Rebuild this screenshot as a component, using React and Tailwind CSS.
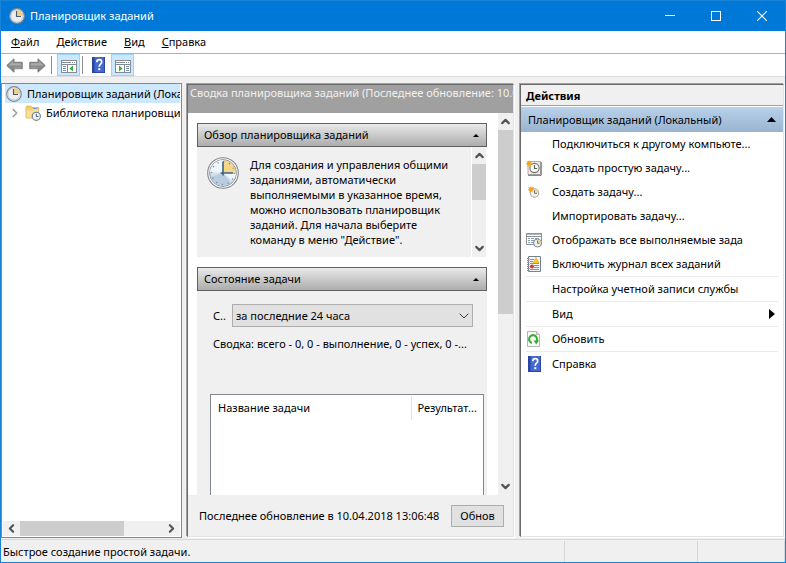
import { ChevronDown, ChevronLeft, ChevronRight, ChevronUp } from 'lucide-react';

function ClockIcon({ className = 'size-4' }) {
  return (
    <svg viewBox="0 0 32 32" className={className} aria-hidden="true">
      <circle cx="16" cy="16" r="15.3" fill="#fafafa" stroke="#85878a" strokeWidth="1.1" />
      <circle cx="16" cy="16" r="13.4" fill="#d3e0ec" stroke="#8e949a" strokeWidth="1" />
      <path d="M16 16L3.500 20A12.800 12.800 0 0 0 24 26z" fill="#b9cde0" />
      <path d="M16 16L3 15A13 13 0 0 1 16 3zM16 16L26 24A13 13 0 0 0 29 16z" fill="#eff5fa" />
      <path d="M16 16V3.200A12.800 12.800 0 0 1 28.800 16z" fill="#f5d58a" />
      <circle cx="16" cy="16" r="11.400" fill="none" stroke="#6c8098" strokeWidth="1.400" strokeDasharray="1 4.970" />
      <path d="M16 4.500V18.500M13.500 16H26" stroke="#3d6186" strokeWidth="1.600" fill="none" />
    </svg>
  );
}

// small icons draw the clock with thicker hands so it stays readable
function SmallClock() {
  return (
    <svg viewBox="0 0 16 16" className="size-4 shrink-0" aria-hidden="true">
      <circle cx="8" cy="8" r="7.3" fill="#e9eef2" stroke="#85878a" strokeWidth="1.2" />
      <circle cx="8" cy="8" r="6" fill="none" stroke="#c4c8cc" strokeWidth=".8" />
      <path d="M8 8V2.2A5.8 5.8 0 0 1 13.8 8z" fill="#f3cf86" />
      <path d="M7.500 3V8.500H12" stroke="#4c5a68" strokeWidth="1.1" fill="none" />
    </svg>
  );
}

function FolderClock() {
  return (
    <svg viewBox="0 0 16 16" className="size-4 shrink-0" aria-hidden="true">
      <path d="M1 2.500l.8-1.500h4l1 1.500h6.700V13H1z" fill="#f3cf74" stroke="#d9ae52" strokeWidth=".8" />
      <path d="M8 3.500h4" stroke="#6fa5d8" strokeWidth="1" />
      <path d="M1.500 5.500h5l1-1h5.500v8H1.500z" fill="#f9df98" />
      <circle cx="11.300" cy="11.300" r="4.100" fill="#eef4f7" stroke="#6e7f87" strokeWidth="1.100" />
      <path d="M11.300 8.800v2.700h2.200" stroke="#3f6378" strokeWidth="1" fill="none" />
    </svg>
  );
}

function HelpIcon() {
  return (
    <svg viewBox="0 0 13 16" className="h-4 w-[13px]" aria-hidden="true">
      <rect width="13" height="16" fill="#4468cf" />
      <path d="M0 0h2.500v16H0z" fill="#2845a4" />
      <path d="M12.500 0v16M0 15.500h13" stroke="#2b479f" />
      <path d="M4.800 5.200C4.800 3.500 5.700 2.700 7.200 2.700c1.500 0 2.500.8 2.500 2.300 0 2-2.500 2.300-2.500 4.700" stroke="#fff" strokeWidth="1.700" fill="none" />
      <rect x="6.300" y="11.200" width="2" height="2" fill="#fff" />
    </svg>
  );
}

function ArrowIcon({ flip }) {
  return (
    <svg viewBox="0 0 17 15" className={flip ? 'h-[15px] w-[17px] -scale-x-100' : 'h-[15px] w-[17px]'} aria-hidden="true">
      <path d="M.8 7.500L8 .8v3.500h8.200v6.400H8v3.500z" fill="#8a8a8a" stroke="#777" strokeLinejoin="round" />
      <path d="M2.500 7.400L7.200 3v2.300h8v2.100z" fill="#aaa" />
      <path d="M8 10h7.500" stroke="#a4a4a4" />
    </svg>
  );
}

function PaneIcon({ right }) {
  return (
    <svg viewBox="0 0 16 13" className="h-[13px] w-4" aria-hidden="true">
      <rect x=".5" y=".5" width="15" height="12" fill="#fff" stroke="#858b94" />
      <path d="M1 2.500h9M11 2.500h1M13 2.500h1" stroke="#858b94" />
      <path d="M1 4.500h14" stroke="#858b94" />
      {right ? (
        <>
          <path d="M9.500 5v7" stroke="#858b94" />
          <path d="M11 6.500h3M11 8.500h3M11 10.500h3" stroke="#6f8fb3" />
          <path d="M4 5.500l3.500 3L4 11.500z" fill="#33ad3a" />
        </>
      ) : (
        <>
          <path d="M6.500 5v7" stroke="#858b94" />
          <path d="M2 6.500h3M2 8.500h3M2 10.500h3" stroke="#6f8fb3" />
          <path d="M12 5.500l-3.500 3 3.500 3z" fill="#33ad3a" />
        </>
      )}
    </svg>
  );
}

function BasicTaskIcon() {
  return (
    <svg viewBox="0 0 16 16" className="size-4" aria-hidden="true">
      <path d="M2 1.500h12.500v13H2z" fill="#eeeceb" stroke="#b0adab" />
      <path d="M15.200 2v13.300H2" fill="none" stroke="#6d6968" />
      <circle cx="8.500" cy="8" r="4.600" fill="#f8f6ef" stroke="#77746f" strokeWidth="1.100" />
      <path d="M8.500 5v3.500h2.700" stroke="#56616d" strokeWidth="1.100" fill="none" />
      <path d="M3 0l.8 2L6 1.400 5 3.200l2 1-2.200.6.3 2.200L3.200 5.600 1.400 7l.1-2.200L-.5 4.200 1.200 3 .5 1l2 .8z" fill="#f5a81c" />
    </svg>
  );
}

function NewTaskIcon() {
  return (
    <svg viewBox="0 0 16 16" className="size-4" aria-hidden="true">
      <circle cx="8.500" cy="9" r="4.200" fill="#f4f2ec" stroke="#aaa6a2" strokeWidth="1.100" />
      <path d="M8.500 9V5a4 4 0 0 1 4 4z" fill="#f0d9a0" />
      <path d="M8.500 6.200v3.200H11" stroke="#6c7a88" fill="none" />
      <path d="M5 2l.8 1.600L8 3 7 5l1.500 1-2 .5.2 2L5 7.200 3.300 8.500l.1-2-1.900-.6L3 4.800 2.200 3l2 .4z" fill="#f5a31c" />
    </svg>
  );
}

function RunningTasksIcon() {
  return (
    <svg viewBox="0 0 16 16" className="size-4" aria-hidden="true">
      <path d="M.5 1.500h15v11H.5z" fill="#fff" stroke="#8b9199" />
      <path d="M1 2.500h14" stroke="#b5bac1" strokeWidth="1" />
      <path d="M1 4.500h14" stroke="#8b9199" />
      <path d="M2 6.500h2M5 6.500h3M9 6.500h4M2 8.500h2M5 8.500h3M2 10.500h2M5 10.500h3" stroke="#8b9bb0" />
      <circle cx="11.500" cy="11" r="4" fill="#e9f1f4" stroke="#84878a" />
      <path d="M11.500 11V7.500A3.500 3.500 0 0 1 15 11z" fill="#efd69a" />
      <path d="M11.500 8.500v2.800h2" stroke="#4283a0" fill="none" />
    </svg>
  );
}

function JournalIcon() {
  return (
    <svg viewBox="0 0 16 16" className="size-4" aria-hidden="true">
      <path d="M2.500.5h12v15h-12z" fill="#f5f7fa" stroke="#747f92" />
      <path d="M4 3.500h4M4 5.500h3M4 7.500h9M8 9.500h5M8 11.500h5M4 13.500h9" stroke="#6d93cf" />
      <path d="M1 2.500h2.500M1 4.500h2.500M1 6.500h2.500M1 8.500h2.500M1 10.500h2.500M1 12.500h2.500M1 14.500h2.500" stroke="#8a9098" />
      <path d="M10 1.500L13.200 7H7z" fill="#f8cb2c" stroke="#dfa916" strokeWidth=".6" />
      <circle cx="6" cy="10.500" r="2" fill="#d7332f" />
    </svg>
  );
}

function RefreshIcon() {
  return (
    <svg viewBox="0 0 16 16" className="size-4" aria-hidden="true">
      <path d="M1.500.5h9l3 3v12h-12z" fill="#fbfbfb" stroke="#b2b5b8" />
      <path d="M10.500.5v3h3" fill="#e8e8e8" stroke="#b2b5b8" />
      <path d="M6 12A4 4 0 1 1 10.600 10" fill="none" stroke="#3aae34" strokeWidth="2" />
      <path d="M7.500 9.500h5.500l-2.700 4z" fill="#3aae34" />
    </svg>
  );
}

const actions = [
  { label: 'Подключиться к другому компьюте...' },
  { label: 'Создать простую задачу...', icon: <BasicTaskIcon /> },
  { label: 'Создать задачу...', icon: <NewTaskIcon /> },
  { label: 'Импортировать задачу...' },
  { label: 'Отображать все выполняемые зада', icon: <RunningTasksIcon /> },
  { label: 'Включить журнал всех заданий', icon: <JournalIcon /> },
  { label: 'Настройка учетной записи службы', line: true },
  { label: 'Вид', line: true, submenu: true },
  { label: 'Обновить', icon: <RefreshIcon />, line: true },
  { label: 'Справка', icon: <HelpIcon />, line: true },
];

const menu = [
  ['Ф', 'айл'],
  ['Д', 'ействие'],
  ['В', 'ид'],
  ['С', 'правка'],
];

function TitleBar() {
  return (
    <header className="flex h-[30px] shrink-0 items-center bg-[#0078d7] pl-2 text-white">
      <SmallClock />
      <h1 className="flex-1 pl-[5px]">Планировщик заданий</h1>
      <button aria-label="Свернуть" className="grid h-full w-[46px] place-items-center">
        <svg viewBox="0 0 10 10" className="size-2.5"><path d="M0 4.500h10" stroke="#fff" /></svg>
      </button>
      <button aria-label="Развернуть" className="grid h-full w-[46px] place-items-center">
        <svg viewBox="0 0 10 10" className="size-2.5"><rect x=".5" y=".5" width="9" height="9" fill="none" stroke="#fff" /></svg>
      </button>
      <button aria-label="Закрыть" className="grid h-full w-[46px] place-items-center">
        <svg viewBox="0 0 10 10" className="size-2.5"><path d="M0 0l10 10M10 0L0 10" stroke="#fff" strokeWidth="1.100" /></svg>
      </button>
    </header>
  );
}

function Toolbar() {
  return (
    <div className="flex h-[23px] shrink-0 items-center border-b border-[#dcdcdc] bg-white pl-[5px]">
      <button aria-label="Назад"><ArrowIcon /></button>
      <button aria-label="Вперед" className="ml-1.5"><ArrowIcon flip /></button>
      <span className="mx-[5px] h-[18px] w-px bg-[#8d8d8d]" />
      <button aria-label="Дерево консоли" className="grid h-[22px] w-[23px] place-items-center border border-[#99d1ff] bg-[#cce8ff] pt-0.5">
        <PaneIcon />
      </button>
      <span className="mr-[9px] ml-0.5 h-[18px] w-px bg-[#8d8d8d]" />
      <button aria-label="Справка"><HelpIcon /></button>
      <button aria-label="Панель действий" className="ml-1.5 grid h-[22px] w-[23px] place-items-center border border-[#99d1ff] bg-[#cce8ff] pt-0.5">
        <PaneIcon right />
      </button>
    </div>
  );
}

function Tree() {
  return (
    <nav className="flex min-w-0 flex-col border border-[#828790] bg-white px-px pb-px">
      <ul className="flex-1 overflow-hidden whitespace-nowrap">
        <li className="ml-0.5 flex h-[19px] items-center bg-[#cce8ff] pl-px">
          <SmallClock />
          <span className="pl-[5px]">Планировщик заданий (Локальный)</span>
        </li>
        <li className="flex h-[19px] items-center pl-[5px]">
          <ChevronRight className="size-3.5 shrink-0 text-[#a0a0a0]" strokeWidth={3} />
          <span className="w-[3px] shrink-0" />
          <FolderClock />
          <span className="pl-[5px]">Библиотека планировщика</span>
        </li>
      </ul>
      <div className="flex h-[15px] items-center bg-[#f0f0f0]">
        <ChevronLeft className="mx-0.5 size-[13px] text-[#555]" strokeWidth={4} />
        <div className="h-full w-[104px] bg-[#cdcdcd]" />
        <ChevronRight className="mr-0.5 ml-auto size-[13px] text-[#555]" strokeWidth={4} />
      </div>
    </nav>
  );
}

function SectionHeader({ children }) {
  return (
    <button className="flex h-6 w-full shrink-0 items-center justify-between border border-[#606060] bg-linear-to-b from-[#eaeaea] to-[#acacac] px-1.5 text-left">
      <span>{children}</span>
      <svg viewBox="0 0 6 3" className="mr-px h-[3px] w-[6px]"><path d="M3 0l3 3H0z" /></svg>
    </button>
  );
}

function Summary() {
  return (
    <main className="m-px flex min-w-0 flex-col border border-t-[#696969] border-r-[#e3e3e3] border-b-[#e3e3e3] border-l-[#696969] shadow-[-1px_-1px_0_#a0a0a0,1px_1px_0_#fff]">
      <h2 className="h-7 shrink-0 overflow-hidden bg-[#a0a0a0] pl-0.5 whitespace-nowrap text-[#f0f0f0]">
        Сводка планировщика заданий (Последнее обновление: 10.04.2018 13:06:48)
      </h2>
      <div className="flex min-h-0 flex-1">
        <div className="flex min-w-0 flex-1 flex-col overflow-hidden bg-white pt-2.5 pr-[11px] pl-[9px]">
          <SectionHeader>Обзор планировщика заданий</SectionHeader>
          <section className="mb-2.5 flex h-[110px] shrink-0 bg-[#f0f0f0]">
            <ClockIcon className="mt-2.5 ml-2.5 size-8 shrink-0" />
            <p className="mt-2.5 ml-[11px] flex-1 leading-[15px] whitespace-nowrap">
              Для создания и управления общими<br />
              заданиями, автоматически<br />
              выполняемыми в указанное время,<br />
              можно использовать планировщик<br />
              заданий. Для начала выберите<br />
              команду в меню "Действие".
            </p>
            <div className="flex w-4 flex-col items-center border-x border-white">
              <ChevronUp className="my-0.5 size-[13px] text-[#555]" strokeWidth={4} />
              <div className="h-9 w-full bg-[#cdcdcd]" />
              <ChevronDown className="mt-auto mb-0.5 size-[13px] text-[#555]" strokeWidth={4} />
            </div>
          </section>
          <SectionHeader>Состояние задачи</SectionHeader>
          <section className="flex min-h-0 flex-1 flex-col bg-[#f0f0f0]">
            <div className="mt-[13px] mr-3.5 ml-4 flex h-[23px] items-center">
              <label htmlFor="period" className="w-[19px] shrink-0">С..</label>
              <div className="relative h-full flex-1">
                <select id="period" className="h-full w-full appearance-none border border-[#adadad] bg-[#e1e1e1] px-[3px]">
                  <option>за последние 24 часа</option>
                </select>
                <ChevronDown className="pointer-events-none absolute top-1 right-px size-4 text-[#333]" strokeWidth={1.5} />
              </div>
            </div>
            <p className="mt-[9px] ml-4 whitespace-nowrap">Сводка: всего - 0, 0 - выполнение, 0 - успех, 0 -...</p>
            <div className="mt-[42px] mr-[3px] ml-[13px] min-h-0 flex-1 border border-b-0 border-[#828790] bg-white pt-px">
              <table className="w-full table-fixed">
                <thead>
                  <tr className="h-6 text-left">
                    <th className="border-r border-[#e5e5e5] pl-[7px] font-normal">Название задачи</th>
                    <th className="w-[72px] pl-1.5 font-normal whitespace-nowrap">Результат...</th>
                  </tr>
                </thead>
              </table>
            </div>
          </section>
        </div>
        <div className="flex w-[15px] flex-col items-center">
          <ChevronUp className="my-0.5 size-[13px] text-[#555]" strokeWidth={4} />
          <div className="h-[184px] w-full bg-[#cdcdcd]" />
          <ChevronDown className="mt-auto mb-0.5 size-[13px] text-[#555]" strokeWidth={4} />
        </div>
      </div>
      <div className="flex h-[41px] shrink-0 items-center justify-between pr-[9px] pl-[11px] whitespace-nowrap">
        <span>Последнее обновление в 10.04.2018 13:06:48</span>
        <button className="h-[22px] w-[53px] border border-[#adadad] bg-[#e1e1e1]">Обнов</button>
      </div>
    </main>
  );
}

function Actions() {
  return (
    <aside className="m-px flex min-w-0 flex-col border border-t-[#696969] border-r-[#e3e3e3] border-b-[#e3e3e3] border-l-[#696969] bg-white shadow-[-1px_-1px_0_#a0a0a0,1px_1px_0_#fff]">
      <h2 className="h-[21px] border-b border-[#a0a0a0] bg-[#f0f0f0] pl-[5px] leading-[21px] font-bold">Действия</h2>
      <button className="mt-px flex h-[25px] items-center justify-between bg-linear-to-b from-[#b9d1ea] to-[#99b4d1] pr-[7px] pl-[7px]">
        <span>Планировщик заданий (Локальный)</span>
        <svg viewBox="0 0 9 5" className="h-[5px] w-[9px]"><path d="M4.500 0L9 5H0z" /></svg>
      </button>
      <ul className="px-[5px]">
        {actions.map((item) => (
          <li key={item.label} className={item.line ? 'border-t border-[#ebebeb]' : ''}>
            <button className="flex h-6 w-full items-center text-left whitespace-nowrap">
              <span className="grid w-4 shrink-0 place-items-center">{item.icon}</span>
              <span className="flex-1 pl-2.5">{item.label}</span>
              {item.submenu && <svg viewBox="0 0 6 10" className="mr-[3px] h-2.5 w-[6px]"><path d="M0 0l6 5-6 5z" /></svg>}
            </button>
          </li>
        ))}
      </ul>
    </aside>
  );
}

export default function App() {
  return (
    <div className="flex h-screen flex-col border border-[#1883d7] bg-[#f0f0f0] font-['Noto_Sans','Open_Sans',sans-serif] text-[11px] leading-4 text-black">
      <TitleBar />
      <div className="flex h-[23px] shrink-0 items-center gap-[17px] border-b border-[#adb0b8] bg-white pl-2.5">
        {menu.map(([key, rest]) => (
          <button key={key}><u>{key}</u>{rest}</button>
        ))}
      </div>
      <Toolbar />
      <div className="grid min-h-0 flex-1 grid-cols-[181px_minmax(0,1fr)_266px] gap-x-1 pt-1.5 pb-px">
        <Tree />
        <Summary />
        <Actions />
      </div>
      <footer className="flex h-[23px] shrink-0 items-center border-t border-[#d7d7d7] pt-px pl-0.5">
        <span className="flex-1">Быстрое создание простой задачи.</span>
        <span className="h-full w-[133px] border-l border-[#d7d7d7]" />
        <span className="h-full w-[88px] border-x border-[#d7d7d7]" />
      </footer>
    </div>
  );
}
